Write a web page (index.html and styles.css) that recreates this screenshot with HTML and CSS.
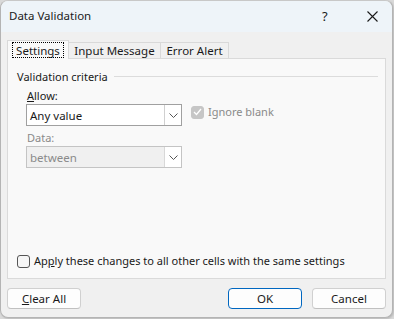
FILE: index.html
```html
<!DOCTYPE html>
<html>
<head>
<meta charset="utf-8">
<link rel="stylesheet" href="styles.css">
</head>
<body>
<div class="dialog">
  <div class="titlebar">
    <span class="title">Data Validation</span>
    <span class="help">?</span>
    <span class="close"><svg width="11" height="11" viewBox="0 0 11 11"><path d="M0.5 0.5L10.5 10.5M10.5 0.5L0.5 10.5" stroke="#1a1a1a" stroke-width="1.1" fill="none"/></svg></span>
  </div>
  <div class="content">
    <div class="tabs">
      <div class="tab active"><span class="focus">Settings</span></div>
      <div class="tab w2">Input Message</div>
      <div class="tab w3">Error Alert</div>
    </div>
    <div class="panel">
      <div class="group">
        <span class="group-label">Validation criteria</span>
        <span class="group-line"></span>
      </div>
      <div class="field-label"><u>A</u>llow:</div>
      <div class="row">
        <div class="select">
          <span class="value">Any value</span>
          <span class="drop"><svg width="9" height="5" viewBox="0 0 9 5"><path d="M0.5 0.5L4.5 4.5L8.5 0.5" stroke="#555" fill="none"/></svg></span>
        </div>
        <div class="check disabled-check">
          <span class="box checked"><svg width="9" height="8" viewBox="0 0 9 8"><path d="M1 4L3.5 6.5L8 1" stroke="#fff" stroke-width="1.3" fill="none"/></svg></span>
          <span class="check-label muted">Ignore blank</span>
        </div>
      </div>
      <div class="field-label muted">Data:</div>
      <div class="row">
        <div class="select disabled">
          <span class="value">between</span>
          <span class="drop"><svg width="9" height="5" viewBox="0 0 9 5"><path d="M0.5 0.5L4.5 4.5L8.5 0.5" stroke="#555" fill="none"/></svg></span>
        </div>
      </div>
      <div class="spacer"></div>
      <div class="check apply">
        <span class="box"></span>
        <span class="check-label">Ap<u>p</u>ly these changes to all other cells with the same settings</span>
      </div>
    </div>
    <div class="buttons">
      <button class="btn"><u>C</u>lear All</button>
      <span class="grow"></span>
      <button class="btn primary">OK</button>
      <button class="btn">Cancel</button>
    </div>
  </div>
</div>
</body>
</html>
```
FILE: styles.css
```css
html, body {
  margin: 0;
  padding: 0;
}
body {
  width: 394px;
  height: 319px;
  background: #d9d9d9;
  font-family: "Noto Sans", "Open Sans", sans-serif;
  font-size: 11px;
  color: #1a1a1a;
  overflow: hidden;
}
.dialog {
  width: 391px;
  height: 316px;
  background: #f0f0f0;
  border: 1px solid #b4b4b4;
  border-top-color: #c8c8c8;
  border-radius: 8px;
  overflow: hidden;
  display: flex;
  flex-direction: column;
  box-shadow: 1px 1px 2px rgba(0,0,0,0.15);
}
.titlebar {
  height: 31px;
  flex: none;
  background: #eef4f9;
  display: flex;
  align-items: center;
  padding-left: 8px;
}
.title {
  flex: 1;
  font-size: 11.5px;
  line-height: 16px;
  margin-top: -1px;
}
.help {
  width: 12px;
  margin-right: 33px;
  font-size: 13px;
  margin-top: -1px;
}
.close {
  width: 11px;
  margin-right: 14px;
  display: flex;
}
.content {
  flex: 1;
  padding: 8px 6px 0 6px;
  display: flex;
  flex-direction: column;
}
.tabs {
  display: flex;
  align-items: flex-end;
  height: 18px;
  position: relative;
  z-index: 1;
}
.tab {
  height: 16px;
  border: 1px solid #d9d9d9;
  border-bottom: none;
  border-left: none;
  background: #f0f0f0;
  display: flex;
  align-items: center;
  justify-content: center;
  box-sizing: border-box;
  line-height: 14px;
  font-size: 11.5px;
}
.tab.active {
  width: 62px;
  height: 19px;
  border-left: 1px solid #d9d9d9;
  background: #f9f9f9;
  margin-bottom: -1px;
  padding-bottom: 1px;
}
.focus {
  outline: 1px dotted #000;
  outline-offset: 0;
  padding: 1px 3px 0 3px;
  line-height: 13px;
}
.w2 { width: 92px; }
.w3 { width: 68px; }
.panel {
  height: 221px;
  box-sizing: border-box;
  border: 1px solid #dadada;
  background: #f9f9f9;
  padding: 9px 7px 8px 9px;
  display: flex;
  flex-direction: column;
}
.group {
  display: flex;
  align-items: center;
  height: 16px;
}
.group-label {
  margin-right: 6px;
}
.group-line {
  flex: 1;
  height: 1px;
  background: #dcdcdc;
}
.field-label {
  margin-top: 4px;
  margin-left: 10px;
  height: 15px;
  line-height: 15px;
}
.muted {
  color: #8a8a8a;
}
.row {
  display: flex;
  align-items: flex-start;
  margin-top: 1px;
}
.select {
  margin-left: 9px;
  width: 156px;
  height: 22px;
  flex: none;
  box-sizing: border-box;
  border: 1px solid #a0a0a0;
  background: #fff;
  display: flex;
  align-items: center;
}
.select .value {
  flex: 1;
  padding-left: 3px;
  font-size: 11.5px;
}
.select .drop {
  width: 16px;
  height: 20px;
  border-left: 1px solid #d0d0d0;
  display: flex;
  align-items: center;
  justify-content: center;
}
.select.disabled {
  background: #f0f0f0;
  border-color: #c4c4c4;
  color: #8a8a8a;
}
.select.disabled .drop {
  border-left-color: #d8d8d8;
  background: #fff;
}
.check {
  display: flex;
  align-items: center;
}
.disabled-check {
  margin-left: 9px;
}
.box {
  width: 13px;
  height: 13px;
  box-sizing: border-box;
  border: 1px solid #555;
  border-radius: 3px;
  background: #f6f6f6;
  display: flex;
  align-items: center;
  justify-content: center;
}
.box.checked {
  background: #c6c6c6;
  border-color: #c6c6c6;
}
.check-label {
  margin-left: 4px;
  line-height: 16px;
}
.spacer {
  flex: 1;
}
.apply {
  margin-bottom: 1px;
}
.buttons {
  display: flex;
  margin-top: 9px;
}
.grow { flex: 1; }
.btn {
  font-family: inherit;
  font-size: 11.5px;
  color: #1a1a1a;
  width: 74px;
  height: 21px;
  box-sizing: border-box;
  border: 1px solid #d0d0d0;
  border-bottom-color: #c0c0c0;
  border-radius: 4px;
  background: #fdfdfd;
  padding: 0;
  line-height: 16px;
}
.btn.primary {
  border-color: #0067c0;
  margin-right: 10px;
}
```
